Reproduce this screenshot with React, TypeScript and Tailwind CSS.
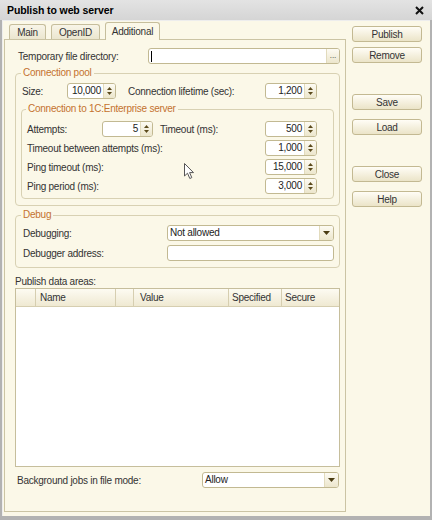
import React from 'react';

function Spin({ value, w }: { value: string; w: string }) {
  return (
    <div className={`flex h-[16px] ${w} overflow-hidden rounded-[3px] border border-[#c2b992] bg-white`}>
      <div className="flex-1 pr-[2px] text-right leading-[14px] text-[#222]">{value}</div>
      <div className="flex w-[12px] flex-col items-center justify-center gap-[2px] border-l border-[#e2dbbd] bg-gradient-to-b from-[#fdfbf3] to-[#ece6cc]">
        <svg width="5" height="3">
          <path d="M0 3 L2.5 0 L5 3Z" fill="#5b4a1c" />
        </svg>
        <svg width="5" height="3">
          <path d="M0 0 L5 0 L2.5 3Z" fill="#5b4a1c" />
        </svg>
      </div>
    </div>
  );
}

function Select({ value }: { value: string }) {
  return (
    <div className="flex h-[16px] flex-1 overflow-hidden rounded-[3px] border border-[#c2b992] bg-white">
      <div className="flex-1 pl-[2px] leading-[14px] text-[#222]">{value}</div>
      <div className="flex w-[14px] items-center justify-center border-l border-[#e2dbbd] bg-gradient-to-b from-[#fdfbf3] to-[#ece6cc]">
        <svg width="7" height="4">
          <path d="M0 0 L7 0 L3.5 4Z" fill="#4a3c12" />
        </svg>
      </div>
    </div>
  );
}

function Button({ label, className }: { label: string; className?: string }) {
  return (
    <div
      className={`flex h-[16px] w-[70px] items-center justify-center rounded-[3px] border border-[#c3b992] bg-gradient-to-b from-[#fffdf6] to-[#ebe4c8] text-[#333] ${className ?? ''}`}
    >
      {label}
    </div>
  );
}

export default function App() {
  const tabs = [
    { name: 'Main', w: 'w-[37px]', active: false },
    { name: 'OpenID', w: 'w-[49px]', active: false },
    { name: 'Additional', w: 'w-[55px]', active: true },
  ];

  const serverRows = [
    { label: 'Timeout between attempts (ms):', value: '1,000' },
    { label: 'Ping timeout (ms):', value: '15,000' },
    { label: 'Ping period (ms):', value: '3,000' },
  ];

  return (
    <div className="relative flex h-[520px] w-[432px] flex-col overflow-hidden bg-[#b2b2b2] px-[2px] pb-[4px] font-['Liberation_Sans',Arial,sans-serif] text-[10px] tracking-[-0.25px] text-[#333]">
      {/* title bar */}
      <div className="-mx-[2px] flex h-[20px] shrink-0 items-center justify-between bg-gradient-to-b from-[#e3e3e3] to-[#d5d5d5] pl-[7px] pr-[8px] pt-[1px]">
        <span className="text-[10.5px] font-bold tracking-[-0.1px] text-black">Publish to web server</span>
        <svg width="9" height="9" viewBox="0 0 9 9">
          <path d="M1 1 L8 8 M8 1 L1 8" stroke="#111" strokeWidth="2" />
        </svg>
      </div>

      <div className="flex flex-1 border-l border-t border-[#ededed] bg-[#fbf8e8]">
        {/* left: tabs + panel */}
        <div className="ml-[1px] flex w-[342px] flex-col pb-[4px] pt-[1px]">
          <div className="flex h-[17px] items-end gap-[5px] pl-[5px]">
            {tabs.map((t) =>
              t.active ? (
                <div
                  key={t.name}
                  className={`relative z-10 -mb-px flex h-[18px] ${t.w} items-center justify-center rounded-t-[3px] border border-b-0 border-[#c6be9c] bg-[#fbf8e8] pb-[1px]`}
                >
                  {t.name}
                </div>
              ) : (
                <div
                  key={t.name}
                  className={`flex h-[15px] ${t.w} items-center justify-center rounded-t-[3px] border border-b-0 border-[#c6be9c] bg-gradient-to-b from-[#f8f5e8] to-[#ebe6cf]`}
                >
                  {t.name}
                </div>
              ),
            )}
          </div>

          <div className="flex flex-1 flex-col border border-[#cbc4a4] pl-[10px] pr-[5px]">
            {/* temporary dir */}
            <div className="mt-[8px] flex h-[16px] items-center">
              <div className="w-[133px] pl-[3px]">Temporary file directory:</div>
              <div className="flex h-[16px] flex-1 overflow-hidden rounded-[3px] border border-[#c2b992] bg-white">
                <div className="flex flex-1 items-center">
                  <div className="ml-[2px] h-[11px] w-[1px] bg-black" />
                </div>
                <div className="flex w-[13px] items-end justify-center border-l border-[#e2dbbd] bg-gradient-to-b from-[#fdfbf3] to-[#ece6cc] pb-[3px] text-[8px] leading-[8px] tracking-[0px] text-[#333]">
                  ...
                </div>
              </div>
            </div>

            {/* connection pool */}
            <fieldset className="mt-[3px] rounded-[4px] border border-[#d8d1b3] pb-[6px]">
              <legend className="ml-[5px] px-[2px] leading-[12px] text-[#c4722f]">Connection pool</legend>
              <div className="mt-[4px] flex h-[16px] items-center pl-[6px] pr-[22px]">
                <div className="w-[45px]">Size:</div>
                <Spin value="10,000" w="w-[49px]" />
                <div className="ml-[12px] flex-1">Connection lifetime (sec):</div>
                <Spin value="1,200" w="w-[52px]" />
              </div>

              <fieldset className="ml-[5px] mr-[5px] mt-[4px] rounded-[4px] border border-[#d8d1b3] pb-[4px]">
                <legend className="ml-[4px] px-[2px] leading-[12px] text-[#c4722f]">
                  Connection to 1C:Enterprise server
                </legend>
                <div className="mt-[6px] flex flex-col gap-[3px] pl-[5px] pr-[16px]">
                  <div className="flex h-[16px] items-center">
                    <div className="w-[75px]">Attempts:</div>
                    <Spin value="5" w="w-[51px]" />
                    <div className="ml-[7px] flex-1">Timeout (ms):</div>
                    <Spin value="500" w="w-[52px]" />
                  </div>
                  {serverRows.map((r) => (
                    <div key={r.label} className="flex h-[16px] items-center">
                      <div className="flex-1">{r.label}</div>
                      <Spin value={r.value} w="w-[52px]" />
                    </div>
                  ))}
                </div>
              </fieldset>
            </fieldset>

            {/* debug */}
            <fieldset className="mt-[3px] rounded-[4px] border border-[#d8d1b3] pb-[6px]">
              <legend className="ml-[5px] px-[2px] leading-[12px] text-[#c4722f]">Debug</legend>
              <div className="mt-[4px] flex flex-col gap-[4px] pl-[7px] pr-[5px]">
                <div className="flex h-[16px] items-center">
                  <div className="w-[144px]">Debugging:</div>
                  <Select value="Not allowed" />
                </div>
                <div className="flex h-[16px] items-center">
                  <div className="w-[144px]">Debugger address:</div>
                  <div className="h-[16px] flex-1 rounded-[3px] border border-[#c2b992] bg-white" />
                </div>
              </div>
            </fieldset>

            {/* publish data areas */}
            <div className="mt-[8px] leading-[12px]">Publish data areas:</div>
            <div className="flex h-[179px] flex-col border border-[#c6be9c] bg-white">
              <div className="flex h-[18px] border-b border-[#d6ceb0] bg-gradient-to-b from-[#fdfbf2] to-[#efe9d2] leading-[17px]">
                <div className="w-[20px] border-r border-[#d6ceb0]" />
                <div className="w-[80px] border-r border-[#d6ceb0] pl-[4px]">Name</div>
                <div className="w-[18px] border-r border-[#d6ceb0]" />
                <div className="w-[95px] border-r border-[#d6ceb0] pl-[6px]">Value</div>
                <div className="w-[53px] border-r border-[#d6ceb0] pl-[3px]">Specified</div>
                <div className="flex-1 pl-[3px]">Secure</div>
              </div>
              <div className="flex-1" />
            </div>

            {/* background jobs */}
            <div className="mr-[1px] mt-[5px] flex h-[16px] items-center">
              <div className="w-[187px] pl-[2px]">Background jobs in file mode:</div>
              <Select value="Allow" />
            </div>
          </div>
        </div>

        {/* right: buttons */}
        <div className="ml-[6px] flex w-[70px] flex-col pt-[5px]">
          <Button label="Publish" />
          <Button label="Remove" className="mt-[5px]" />
          <Button label="Save" className="mt-[31px]" />
          <Button label="Load" className="mt-[9px]" />
          <Button label="Close" className="mt-[31px]" />
          <Button label="Help" className="mt-[9px]" />
        </div>
      </div>

      {/* mouse pointer */}
      <svg className="absolute left-[184px] top-[163px]" width="11" height="17" viewBox="0 0 11 17">
        <path
          d="M0.5 0.5 L0.5 13 L3.5 10.2 L5.8 15.5 L7.8 14.6 L5.6 9.6 L9.5 9.6 Z"
          fill="#fff"
          stroke="#555"
          strokeWidth="1"
        />
      </svg>
    </div>
  );
}
